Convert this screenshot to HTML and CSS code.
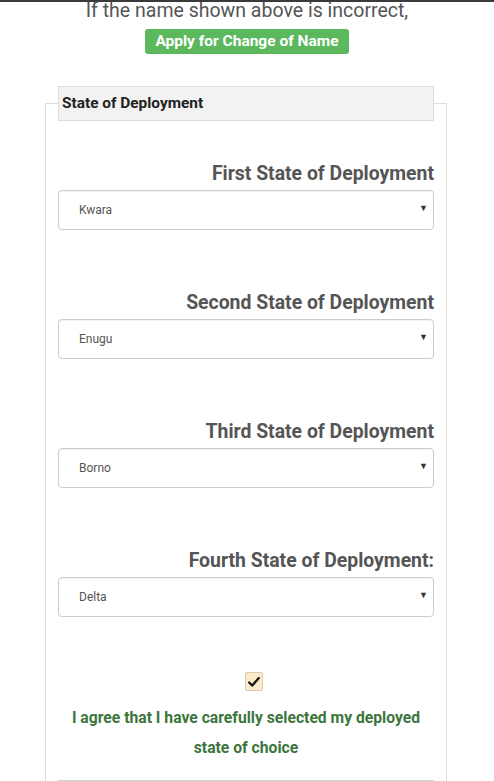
FILE: index.html
```html
<!DOCTYPE html>
<html lang="en">
<head>
  <meta charset="UTF-8" />
  <meta name="viewport" content="width=device-width, initial-scale=1.0"/>
  <title>State of Deployment</title>
  <link rel="stylesheet" href="styles.css">
</head>
<body>

  <div class="top-rule"></div>

  <div class="name-notice">
    <p>If the name shown above is incorrect,</p>
    <a href="#" class="btn-change">Apply for Change of Name</a>
  </div>

  <form id="deploymentForm">
    <fieldset class="deploy-box">
      <legend>State of Deployment</legend>

      <div class="field">
        <label for="state1">First State of Deployment</label>
        <div class="select-wrap">
          <select id="state1">
            <option>Kwara</option>
          </select>
        </div>
      </div>

      <div class="field">
        <label for="state2">Second State of Deployment</label>
        <div class="select-wrap">
          <select id="state2">
            <option>Enugu</option>
          </select>
        </div>
      </div>

      <div class="field">
        <label for="state3">Third State of Deployment</label>
        <div class="select-wrap">
          <select id="state3">
            <option>Borno</option>
          </select>
        </div>
      </div>

      <div class="field">
        <label for="state4">Fourth State of Deployment:</label>
        <div class="select-wrap">
          <select id="state4">
            <option>Delta</option>
          </select>
        </div>
      </div>

      <div class="agree">
        <label class="check">
          <input type="checkbox" checked>
          <span class="box">
            <svg viewBox="0 0 16 16" width="14" height="14">
              <path d="M2.5 8.5 L6 12 L13.5 3.5" fill="none" stroke="#111" stroke-width="2.6" stroke-linecap="round" stroke-linejoin="round"/>
            </svg>
          </span>
        </label>
        <p>I agree that I have carefully selected my deployed state of choice</p>
      </div>

      <div class="submit-strip"></div>
    </fieldset>
  </form>

</body>
</html>
```

FILE: styles.css
```css
* {
  box-sizing: border-box;
}

body {
  margin: 0;
  font-family: Roboto, 'Noto Sans', sans-serif;
  background: #fff;
  color: #555;
  overflow: hidden;
}

.top-rule {
  height: 2px;
  background: #3a3a3a;
}

.name-notice {
  text-align: center;
}

.name-notice p {
  margin: -2px 0 0;
  font-size: 19.5px;
  line-height: 22px;
  color: #555;
}

.btn-change {
  display: inline-block;
  margin-top: 7px;
  padding: 3px 10px;
  background: #5cb85c;
  border-radius: 3px;
  color: #fff;
  font-size: 15.5px;
  font-weight: 700;
  line-height: 19px;
  text-decoration: none;
}

.deploy-box {
  margin: 32px 0 0 45px;
  width: 402px;
  padding: 0 12px;
  border: 1px solid #ddd;
  border-bottom: none;
  min-width: 0;
}

.deploy-box legend {
  width: 100%;
  padding: 7px 3px;
  background: #f2f2f2;
  border: 1px solid #ddd;
  color: #222;
  font-size: 15.4px;
  font-weight: 700;
  line-height: 19px;
}

.field {
  margin-top: 62px;
}

.field:first-of-type {
  margin-top: 42px;
}

.field label {
  display: block;
  margin-bottom: 5px;
  text-align: right;
  font-size: 19.4px;
  font-weight: 700;
  line-height: 22px;
  color: #555;
}

.select-wrap {
  position: relative;
}

.select-wrap::after {
  content: "\25BC";
  position: absolute;
  right: 6px;
  top: 13px;
  font-size: 9px;
  color: #333;
  pointer-events: none;
}

select {
  appearance: none;
  -webkit-appearance: none;
  width: 100%;
  height: 40px;
  padding: 0 20px;
  border: 1px solid #ccc;
  border-radius: 4px;
  background: #fff;
  color: #555;
  font-family: Roboto, sans-serif;
  font-size: 12px;
  box-shadow: inset 0 1px 1px rgba(0, 0, 0, 0.05);
}

.agree {
  margin-top: 55px;
  text-align: center;
}

.check {
  display: inline-block;
  margin-left: 15px;
  line-height: 0;
}

.check input {
  display: none;
}

.check .box {
  display: inline-flex;
  align-items: center;
  justify-content: center;
  width: 18px;
  height: 19px;
  background: #fbebc8;
  border: 1px solid #d9cbb0;
  border-radius: 2px;
}

.agree p {
  margin: 10px 0 0;
  padding: 0 10px;
  color: #3c763d;
  font-size: 15.7px;
  font-weight: 700;
  line-height: 30px;
}

.submit-strip {
  margin-top: 17px;
  height: 40px;
  background: #dff0d8;
  border-top: 2px solid #b8dfc0;
}
```
